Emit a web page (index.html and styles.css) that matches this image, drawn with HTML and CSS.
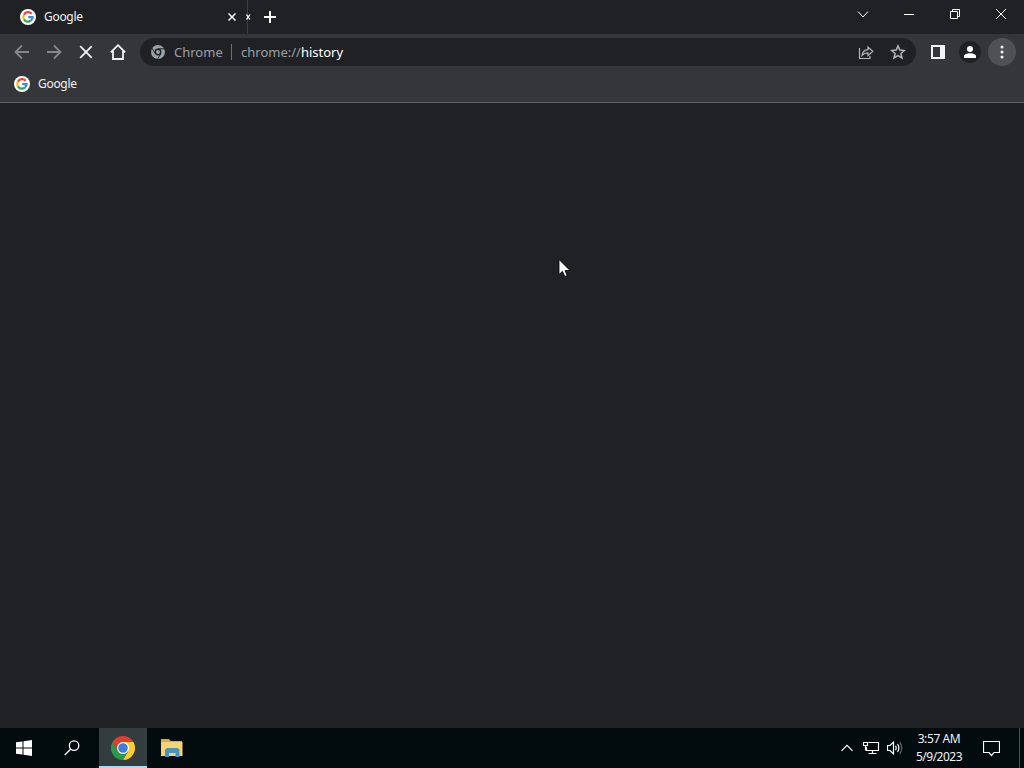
FILE: index.html
```html
<!DOCTYPE html>
<html lang="en">
<head>
    <meta charset="UTF-8">
    <meta name="viewport" content="width=device-width, initial-scale=1.0">
    <title>History</title>
    <link rel="stylesheet" href="styles.css">
</head>
<body>
    <svg class="sprite" width="0" height="0">
        <symbol id="google" viewBox="0 0 16 16">
            <circle cx="8" cy="8" r="8" fill="#fff"/>
            <g fill="none" stroke-width="2.2">
                <path d="M11.6 4.7A4.7 4.7 0 0 0 3.9 5.7" stroke="#ea4335"/>
                <path d="M3.9 5.7A4.7 4.7 0 0 0 3.9 10.3" stroke="#fbbc05"/>
                <path d="M3.9 10.3A4.7 4.7 0 0 0 10.9 11.7" stroke="#34a853"/>
                <path d="M10.9 11.7A4.7 4.7 0 0 0 12.6 8.1H8.2" stroke="#4285f4"/>
            </g>
        </symbol>
    </svg>

    <div class="tab-strip">
        <div class="tab">
            <svg class="favicon"><use href="#google"/></svg>
            <span class="tab-title">Google</span>
            <svg class="tab-close" width="8" height="8" viewBox="0 0 8 8"><path d="M.5.5l7 7M7.5.5l-7 7"/></svg>
        </div>
        <div class="tab-next">
            <svg width="5" height="6" viewBox="0 0 5 6"><path d="M.5.5l3.500 5M4 .5L.5 5.500"/></svg>
        </div>
        <svg class="new-tab" width="12" height="12" viewBox="0 0 12 12"><path d="M6 0v12M0 6h12"/></svg>
        <div class="window-buttons">
            <div><svg width="12" height="12" viewBox="0 0 12 12"><path d="M1 3.500l5 5.500 5-5.500"/></svg></div>
            <div><svg width="12" height="12" viewBox="0 0 12 12"><path d="M1 6.500h10"/></svg></div>
            <div><svg width="12" height="12" viewBox="0 0 12 12"><path d="M1.500 3.500h7v7h-7zM3.500 3.500v-2h7v7h-2"/></svg></div>
            <div><svg width="12" height="12" viewBox="0 0 12 12"><path d="M1 1l10 10M11 1L1 11"/></svg></div>
        </div>
    </div>

    <div class="toolbar">
        <div class="nav">
            <svg class="dim" viewBox="0 0 16 16"><path d="M15 8H2M8 1.500L1.500 8 8 14.500"/></svg>
            <svg class="dim" viewBox="0 0 16 16"><path d="M1 8h13M8 1.500L14.500 8 8 14.500"/></svg>
            <svg viewBox="0 0 16 16"><path d="M2.200 2.200l11.600 11.600M13.800 2.200L2.200 13.800"/></svg>
            <svg viewBox="0 0 16 16"><path d="M.8 8.300L8 1.200l7.200 7.100M3 7v8h10V7"/></svg>
        </div>
        <div class="omnibox">
            <svg class="chip-icon" width="14" height="14" viewBox="0 0 14 14">
                <circle cx="7" cy="7" r="7" fill="#9aa0a6"/>
                <path d="M7 3.800h6.400M4.200 8.600L1 3.100M9.800 8.600L6.600 14" stroke="#202124" stroke-width="1"/>
                <circle cx="7" cy="7" r="2.700" fill="#9aa0a6" stroke="#202124" stroke-width="1.400"/>
            </svg>
            <span class="chip">Chrome</span>
            <span class="divider"></span>
            <span class="url"><span class="scheme">chrome://</span><span class="host">history</span></span>
            <svg class="share" width="16" height="16" viewBox="0 0 16 16"><path d="M1.500 4v10.500H12V12M4 11.500c.5-3.800 2.600-5.600 6-5.800V3l4.800 4.300-4.800 4.300V8.800c-2.600 0-4.500.8-6 2.700z"/></svg>
            <svg class="star" width="16" height="16" viewBox="0 0 16 16"><path d="M8 1.900l1.800 4.200 4.600.4-3.500 3 1.100 4.500L8 11.600 4 14l1.100-4.500-3.500-3 4.600-.4z"/></svg>
        </div>
        <div class="actions">
            <svg width="14" height="14" viewBox="0 0 14 14"><path d="M1 1h12v12H1z" fill="none" stroke="#f1f3f4" stroke-width="2"/><path d="M9 0h5v14H9z" fill="#f1f3f4"/></svg>
            <div class="profile">
                <svg width="12" height="12" viewBox="0 0 12 12" fill="#fff"><circle cx="6" cy="3" r="3"/><path d="M0 12v-1.800C0 8.200 3 7.200 6 7.200s6 1 6 3V12z"/></svg>
            </div>
            <div class="menu">
                <svg width="4" height="14" viewBox="0 0 4 14" fill="#f1f3f4"><circle cx="2" cy="2" r="1.500"/><circle cx="2" cy="7" r="1.500"/><circle cx="2" cy="12" r="1.500"/></svg>
            </div>
        </div>
    </div>

    <div class="bookmarks">
        <svg class="favicon"><use href="#google"/></svg>
        <span class="bookmark-title">Google</span>
    </div>

    <main class="page"></main>

    <div class="taskbar">
        <div class="task">
            <svg width="16" height="16" viewBox="0 0 16 16" fill="#fff"><path d="M0 2.300L6.500 1.400v6.100H0zM7.500 1.200L16 0v7.500H7.500zM0 8.500h6.500v6.100L0 13.700zM7.500 8.500H16V16l-8.500-1.200z"/></svg>
        </div>
        <div class="task">
            <svg width="16" height="16" viewBox="0 0 17 17" fill="none" stroke="#fff" stroke-width="1.400"><circle cx="10.700" cy="6" r="5"/><path d="M7.200 9.600L.8 16"/></svg>
        </div>
        <div class="task active">
            <svg width="24" height="24" viewBox="0 0 24 24">
                <path d="M12 12L1.600 6A12 12 0 0 1 22.400 6z" fill="#e33b2e"/>
                <path d="M1.600 6L6.800 15 12 6z" fill="#e33b2e"/>
                <path d="M17.200 15L12 24A12 12 0 0 0 22.400 6H12z" fill="#fccc33"/>
                <path d="M6.800 15L1.600 6A12 12 0 0 0 12 24l5.200-9z" fill="#2a9a48"/>
                <circle cx="12" cy="12" r="6" fill="#fff"/>
                <circle cx="12" cy="12" r="4.800" fill="#3b7de0"/>
            </svg>
        </div>
        <div class="task explorer">
            <svg width="22" height="18" viewBox="0 0 22 18">
                <path d="M0 0h8l1.500 2H21v15H0z" fill="#e5a93c"/>
                <path d="M0 3h21.500v14H0z" fill="#f5d573"/>
                <path d="M4 18v-7.500L6 9h10.500l2 1.500V18h-4v-4H8v4z" fill="#4a93bd"/>
            </svg>
        </div>
        <div class="tray">
            <svg width="12" height="8" viewBox="0 0 12 8"><path d="M.5 6.800L6 1.300l5.500 5.500"/></svg>
            <svg width="17" height="14" viewBox="0 0 17 14"><path d="M5.500 1.500h10v8h-12V6M9.500 9.500v3M5.500 12.500h8M.5 1.500h4v3h-4zM2.500 4.500v5"/></svg>
            <svg width="16" height="14" viewBox="0 0 16 14"><path d="M.5 4.500H3L6.500 1.200v11.600L3 9.500H.5zM8.500 4.800q1.400 2.200 0 4.400M10.500 3q2.800 4 0 8"/><path class="faint" d="M12.700 1.200q4 5.800 0 11.600"/></svg>
            <div class="clock">
                <span class="time">3:57 AM</span>
                <span class="date">5/9/2023</span>
            </div>
            <svg class="notify" width="17" height="17" viewBox="0 0 17 17"><path d="M.5 1.500h16v11H11L8.500 15.500 6 12.500H.5z"/></svg>
            <span class="peek"></span>
        </div>
    </div>

    <svg class="cursor" width="13" height="20" viewBox="0 0 13 20"><path d="M1 1.500v15l3.500-3.200 2.300 5.200 2.400-1-2.200-5H12z" fill="#fff" stroke="#000" stroke-width=".8"/></svg>
</body>
</html>
```

FILE: styles.css
```css
* {
    box-sizing: border-box;
}

body {
    margin: 0;
    width: 1024px;
    height: 768px;
    display: flex;
    flex-direction: column;
    overflow: hidden;
    background-color: #202124;
    color: #f1f3f4;
    font-family: "Noto Sans", "Open Sans", sans-serif;
    font-size: 12px;
}

svg {
    display: block;
    flex-shrink: 0;
}

.sprite,
.cursor {
    position: absolute;
}

.cursor {
    left: 558px;
    top: 258px;
}

.favicon {
    width: 16px;
    height: 16px;
}

.tab-strip {
    display: flex;
    height: 34px;
    fill: none;
    stroke: #fff;
}

.tab {
    display: flex;
    align-items: center;
    width: 247px;
    padding: 0 11px 0 20px;
}

.tab .favicon {
    stroke: none;
}

.tab-title,
.bookmark-title {
    padding-bottom: 2px;
    letter-spacing: -0.3px;
}

.tab-title {
    margin-left: 8px;
}

.tab-close {
    margin-left: auto;
    stroke-width: 1.5;
}

.tab-next {
    display: flex;
    align-items: center;
    width: 5px;
    border-left: 1px solid #3c3d41;
}

.tab-next svg {
    margin-left: -2px;
    stroke-width: 1.3;
}

.new-tab {
    margin: 11px 0 0 12px;
    stroke-width: 2;
}

.window-buttons {
    display: flex;
    height: 28px;
    margin-left: auto;
}

.window-buttons div {
    display: flex;
    align-items: center;
    justify-content: center;
    width: 46px;
}

.toolbar {
    display: flex;
    align-items: center;
    height: 36px;
    padding-right: 8px;
    background-color: #35363a;
}

.nav {
    display: flex;
    gap: 16px;
    width: 140px;
    padding-left: 14px;
    fill: none;
    stroke: #f1f3f4;
    stroke-width: 1.8;
}

.nav svg {
    width: 16px;
    height: 16px;
}

.nav .dim {
    stroke: #85868a;
}

.omnibox {
    display: flex;
    align-items: center;
    width: 776px;
    height: 28px;
    padding: 0 10px 0 11px;
    border-radius: 14px;
    background-color: #202124;
    color: #9aa0a6;
    font-size: 13px;
}

.chip {
    width: 57px;
    margin-left: 9px;
}

.divider {
    width: 1px;
    height: 16px;
    background-color: #6b6e73;
}

.url {
    margin-left: 9px;
}

.host {
    color: #fff;
}

.share,
.star {
    fill: none;
    stroke: #b4b7bb;
    stroke-width: 1.2;
}

.share {
    margin-left: auto;
}

.star {
    margin-left: 16px;
    stroke-width: 1.5;
}

.actions {
    display: flex;
    align-items: center;
    margin-left: 15px;
}

.profile,
.menu {
    display: flex;
    align-items: center;
    justify-content: center;
    border-radius: 50%;
}

.profile {
    width: 22px;
    height: 22px;
    margin-left: 14px;
    background-color: #202124;
}

.menu {
    width: 28px;
    height: 28px;
    margin-left: 7px;
    background-color: #505155;
}

.bookmarks {
    display: flex;
    align-items: center;
    gap: 8px;
    height: 33px;
    padding: 0 14px 4px;
    border-bottom: 1px solid #606165;
    background-color: #35363a;
}

.page {
    flex: 1;
}

.taskbar {
    display: flex;
    height: 40px;
    background-color: #020b0e;
}

.task {
    display: flex;
    align-items: center;
    justify-content: center;
    width: 48px;
}

.task.active {
    margin-left: 3px;
    padding-top: 2px;
    border-bottom: 2px solid #a3def5;
    background-color: #333d3f;
}

.task.explorer {
    width: 50px;
}

.tray {
    display: flex;
    align-items: center;
    margin-left: auto;
    padding-right: 4px;
    fill: none;
    stroke: #fff;
    stroke-width: 1.2;
}

.tray svg {
    margin-right: 10px;
}

.tray svg + svg {
    margin-right: 7px;
}

.tray svg + svg + svg {
    margin-right: 6px;
}

.tray .faint {
    stroke: #5d6567;
}

.clock {
    display: flex;
    flex-direction: column;
    align-items: center;
    width: 60px;
    line-height: 18px;
    stroke: none;
}

.time {
    letter-spacing: -0.4px;
}

.date {
    letter-spacing: -0.5px;
}

.tray .notify {
    margin: 0 19px 0 14px;
}

.peek {
    width: 1px;
    height: 40px;
    background-color: #485254;
}
```
